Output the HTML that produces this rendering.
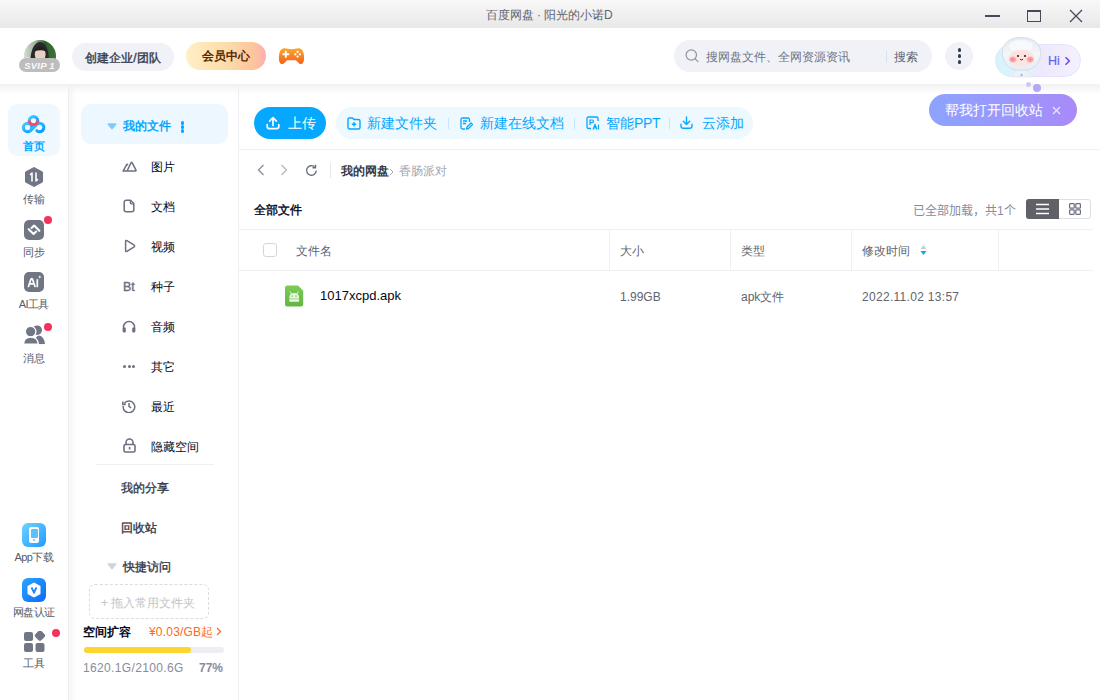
<!DOCTYPE html>
<html><head><meta charset="utf-8">
<style>
*{box-sizing:border-box;margin:0;padding:0}
html,body{width:1100px;height:700px;overflow:hidden;background:#fff;font-family:"Liberation Sans",sans-serif;color:#03081a}
.a{position:absolute}
.t{white-space:nowrap;line-height:16px}
#title{left:0;top:0;width:1100px;height:28px;background:linear-gradient(#f8f8f8,#e8e8e8);}
#hdr{left:0;top:28px;width:1100px;height:56px;background:#fff;z-index:3}
#hshadow{left:0;top:84px;width:1100px;height:10px;background:linear-gradient(#f1f1f1,rgba(255,255,255,0));z-index:4}
#rail{left:0;top:84px;width:69px;height:616px;background:#fff;border-right:1px solid #eceef2}
#side{left:69px;top:84px;width:170px;height:616px;background:#fff;border-right:1px solid #eceef2}
#main{left:239px;top:84px;width:861px;height:616px;background:#fff}
.pill{border-radius:14px}
.rl{width:68px;text-align:center;font-size:11px;letter-spacing:-0.6px;text-indent:-0.6px;color:#555a67;line-height:14px}
.dot{width:8px;height:8px;border-radius:4px;background:#f5325c}
.si{font-size:12px;color:#03081a;line-height:16px}
.tb{font-size:14px;color:#06a7ff;line-height:18px}
.sep{width:1px;background:#c5e6fb}
.th{font-size:12px;color:#5f6470;line-height:16px}
.cl{width:1px;background:#eef0f4}
</style></head>
<body>
<!-- title bar -->
<div id="title" class="a">
  <div class="a t" style="left:486px;top:7px;font-size:12px;color:#5f6470">百度网盘<span style="display:inline-block;width:10px;text-align:center">·</span>阳光的小诺D</div>
  <div class="a" style="left:985px;top:15.3px;width:15px;height:1.4px;background:#454b5a"></div>
  <div class="a" style="left:1027px;top:10px;width:14px;height:12px;border:1.4px solid #454b5a;border-top-width:2px"></div>
  <svg class="a" style="left:1069px;top:9px" width="14" height="14" viewBox="0 0 14 14"><path d="M1 1L13 13M13 1L1 13" stroke="#454b5a" stroke-width="1.3"/></svg>
</div>

<!-- header -->
<div id="hdr" class="a">
  <!-- avatar -->
  <svg class="a" style="left:24px;top:12px" width="32" height="32" viewBox="0 0 32 32">
    <defs><clipPath id="av"><circle cx="16" cy="16" r="16"/></clipPath>
    <linearGradient id="avg" x1="0" y1="0" x2="1" y2="0"><stop offset="0" stop-color="#d5ddd2"/><stop offset="0.35" stop-color="#9db39a"/><stop offset="0.65" stop-color="#2f5e2e"/><stop offset="1" stop-color="#3e7438"/></linearGradient></defs>
    <g clip-path="url(#av)">
      <rect width="32" height="32" fill="url(#avg)"/>
      <circle cx="4" cy="20" r="3" fill="#e8e2e4" opacity="0.8"/>
      <path d="M6.5 32C5.5 18 7 3 16 2C24.5 3 25.5 14 24.5 32z" fill="#2a2a2c"/>
      <ellipse cx="16.2" cy="14.5" rx="5.4" ry="7" fill="#e8d0c2"/>
      <path d="M10.3 11.5Q12.5 6 17 6.3Q21.2 7 22 11.5Q17 9 10.3 11.5z" fill="#231e1f"/>
    </g>
  </svg>
  <div class="a" style="left:19px;top:30px;width:41px;height:14px;border-radius:7px;background:#bdbdbd;color:#fafafa;font-size:9.5px;line-height:15px;text-align:center;font-style:italic;font-weight:bold;letter-spacing:0.2px">SVIP 1</div>
  <!-- create team -->
  <div class="a pill t" style="left:72px;top:15px;width:102px;height:28px;background:#f0f2f8;font-size:12px;line-height:30px;text-align:center;color:#353a4a;-webkit-text-stroke:0.35px #353a4a">创建企业/团队</div>
  <!-- vip -->
  <div class="a pill t" style="left:186px;top:14px;width:80px;height:28px;background:linear-gradient(90deg,#fff0c6 0%,#fddcaa 50%,#fcc59c 85%,#ffadb2 100%);font-size:12px;line-height:29px;text-align:center;color:#5a2900;font-weight:bold">会员中心</div>
  <!-- game -->
  <svg class="a" style="left:278px;top:19px" width="27" height="18" viewBox="0 0 27 18">
    <defs><linearGradient id="gg" x1="0" y1="0" x2="0" y2="1"><stop offset="0" stop-color="#ffa62e"/><stop offset="1" stop-color="#f0621a"/></linearGradient></defs>
    <path d="M6 1.2C3 1.5 1.6 4 1.1 8C0.6 12.5 1 16.5 3.8 17C5.8 17.3 7.2 15 9 13.2H18C19.8 15 21.2 17.3 23.2 17C26 16.5 26.4 12.5 25.9 8C25.4 4 24 1.5 21 1.2C18.5 1 17 2.2 13.5 2.2C10 2.2 8.5 1 6 1.2z" fill="url(#gg)"/>
    <path d="M5.2 7.3h5.2M7.8 4.7v5.2" stroke="#fff" stroke-width="1.9" stroke-linecap="round"/>
    <circle cx="19.6" cy="5" r="1.15" fill="#fff"/><circle cx="19.6" cy="9.6" r="1.15" fill="#fff"/><circle cx="17.3" cy="7.3" r="1.15" fill="#fff"/><circle cx="21.9" cy="7.3" r="1.15" fill="#fff"/>
  </svg>
  <!-- search -->
  <div class="a" style="left:674px;top:12px;width:258px;height:32px;border-radius:16px;background:#f0f2f8"></div>
  <svg class="a" style="left:685px;top:21px" width="15" height="14" viewBox="0 0 15 14"><circle cx="6.3" cy="6" r="5.2" fill="none" stroke="#8d93a2" stroke-width="1.2"/><path d="M10.2 9.8L13 12.6" stroke="#8d93a2" stroke-width="1.2" stroke-linecap="round"/></svg>
  <div class="a t" style="left:706px;top:21px;font-size:12px;color:#6f7483">搜网盘文件、全网资源资讯</div>
  <div class="a" style="left:886px;top:23px;width:1px;height:12px;background:#dde0e7"></div>
  <div class="a t" style="left:894px;top:21px;font-size:12px;color:#5f6470">搜索</div>
  <!-- more -->
  <div class="a" style="left:945px;top:14px;width:28px;height:28px;border-radius:14px;background:#f0f2f8"></div>
  <div class="a" style="left:957.7px;top:20.2px;width:3.6px;height:3.6px;border-radius:2px;background:#333a4e"></div>
  <div class="a" style="left:957.7px;top:26.3px;width:3.6px;height:3.6px;border-radius:2px;background:#333a4e"></div>
  <div class="a" style="left:957.7px;top:32.2px;width:3.6px;height:3.6px;border-radius:2px;background:#333a4e"></div>
  <!-- hi -->
  <div class="a" style="left:995px;top:16px;width:86px;height:33px;border-radius:17px;background:linear-gradient(90deg,#d3f5fd 0%,#e0f3fc 30%,#eee8fd 55%,#f4f1fe 100%);border:1px solid #e8e2fc"></div>
  <svg class="a" style="left:1000px;top:8px" width="44" height="42" viewBox="0 0 44 42">
    <defs><linearGradient id="hg" x1="0" y1="0" x2="0" y2="1"><stop offset="0" stop-color="#e3ebf3"/><stop offset="0.5" stop-color="#f3f6fa"/><stop offset="1" stop-color="#e6edf3"/></linearGradient>
    <radialGradient id="ck" cx="0.5" cy="0.5" r="0.5"><stop offset="0" stop-color="#f7868e"/><stop offset="0.6" stop-color="#f9a5a9"/><stop offset="1" stop-color="#fbd0cf" stop-opacity="0"/></radialGradient></defs>
    <path d="M12 41Q12.5 34 21.5 33.5Q30.5 34 31 41z" fill="#eef2f6" stroke="#dfe5ec" stroke-width="0.8"/>
    <path d="M21 1.5C31 1.5 39.5 6 40.5 15C41.5 24 36 32 28 34H15C7 32 1.5 24 2.5 15C3.5 6 11 1.5 21 1.5z" fill="url(#hg)" stroke="#d5dde7" stroke-width="1"/>
    <ellipse cx="21" cy="10" rx="12" ry="6" fill="#f8fafc" opacity="0.9"/>
    <ellipse cx="21.5" cy="22" rx="12.5" ry="8.2" fill="#fde3df"/>
    <ellipse cx="12.8" cy="23.5" rx="4.5" ry="3.8" fill="url(#ck)"/>
    <ellipse cx="30.2" cy="23.5" rx="4.5" ry="3.8" fill="url(#ck)"/>
    <circle cx="18" cy="20" r="1.1" fill="#3a2020"/><circle cx="25" cy="20" r="1.1" fill="#3a2020"/>
    <path d="M20 23.3q1.5 1.2 3 0" stroke="#3a2020" stroke-width="0.9" fill="none"/>
    <path d="M20 39l1.5-1.5l1.5 1.5l-1.5 1.5z" fill="#7cc3f2"/>
  </svg>
  <div class="a t" style="left:1048px;top:25px;font-size:12.5px;font-weight:500;color:#5566ee;line-height:16px;-webkit-text-stroke:0.2px #5566ee">H<span style="color:#7e58e8;-webkit-text-stroke:0.2px #7e58e8">i</span></div>
  <svg class="a" style="left:1064px;top:28px" width="7" height="10" viewBox="0 0 7 10"><path d="M1.5 1.2L5.3 5L1.5 8.8" stroke="#6a4fe0" stroke-width="1.6" fill="none"/></svg>
</div>
<div class="a" style="left:1026px;top:82px;width:5px;height:5px;border-radius:3px;background:#cfc8fb;z-index:6"></div>
<div class="a" style="left:1033px;top:84px;width:8px;height:8px;border-radius:4px;background:#b3a8f7;z-index:6"></div>
<div id="hshadow" class="a"></div>

<!-- left rail -->
<div id="rail" class="a">
  <div class="a" style="left:8px;top:20px;width:52px;height:52px;border-radius:9px;background:#eff8ff"></div>
  <svg class="a" style="left:21px;top:30px" width="26" height="20" viewBox="0 0 26 20">
    <defs><linearGradient id="lg" x1="0" y1="0" x2="1" y2="1"><stop offset="0" stop-color="#3fd0fb"/><stop offset="1" stop-color="#0798ff"/></linearGradient></defs>
    <g fill="none" stroke="url(#lg)" stroke-width="3.1" stroke-linecap="round">
    <circle cx="12.5" cy="6.8" r="4.2"/>
    <circle cx="6.6" cy="13.5" r="4.2"/>
    <path d="M9.6 16.5L15.7 10.5A4.2 4.2 0 1 1 15.9 16.7"/>
    </g>
    <path d="M8.3 6.5A4.2 4.2 0 0 0 16.7 6.5" stroke="#f84a70" stroke-width="3.1" fill="none"/>
  </svg>
  <div class="a rl t" style="left:0;top:55px;color:#06a7ff;font-weight:bold;font-size:11px">首页</div>
  <!-- transfer -->
  <svg class="a" style="left:24px;top:83px" width="20" height="20" viewBox="0 0 20 20"><path d="M10 0.5L18.5 5v10L10 19.5L1.5 15V5z" fill="#717684" stroke="#717684" stroke-linejoin="round" stroke-width="1"/><path d="M8 6v8M6.5 7.5L8 6M12 14V6M12 14l1.5-1.5" stroke="#fff" stroke-width="1.6" fill="none" stroke-linecap="round"/></svg>
  <div class="a rl t" style="left:0;top:108px">传输</div>
  <!-- sync -->
  <div class="a" style="left:24px;top:136px;width:20px;height:20px;border-radius:5px;background:#717684"></div>
  <svg class="a" style="left:24px;top:136px" width="20" height="20" viewBox="0 0 20 20"><path d="M4.6 9.2L9.6 14L12.2 11.6M15.4 10.8L10.1 5.6L7.5 8" stroke="#fff" stroke-width="2.1" fill="none" stroke-linecap="round" stroke-linejoin="round"/></svg>
  <div class="a dot" style="left:44px;top:132px"></div>
  <div class="a rl t" style="left:0;top:161px">同步</div>
  <!-- AI -->
  <div class="a" style="left:24px;top:188px;width:20px;height:20px;border-radius:5px;background:#717684"></div>
  <svg class="a" style="left:24px;top:188px" width="20" height="20" viewBox="0 0 20 20"><path d="M4.5 14.5L6.8 7.5Q7.6 5.5 8.6 7.5L11 14.5M5.6 11.8h4.4M13.3 7.8v6.7" stroke="#fff" stroke-width="1.7" fill="none" stroke-linecap="round" stroke-linejoin="round"/><path d="M15.8 3.2L16.3 4.5L17.6 5L16.3 5.5L15.8 6.8L15.3 5.5L14 5L15.3 4.5z" fill="#fff"/></svg>
  <div class="a rl t" style="left:0;top:213px">AI工具</div>
  <!-- message -->
  <svg class="a" style="left:23px;top:241px" width="23" height="20" viewBox="0 0 23 20"><circle cx="14.2" cy="5.2" r="4.8" fill="#717684"/><path d="M11 19.2Q12 11 16 10.5Q21 11 22 19.2z" fill="#717684"/><circle cx="7.6" cy="6.6" r="5.3" fill="#717684" stroke="#fff" stroke-width="1.3"/><path d="M0.4 19.2Q1 12.2 7.8 12.2Q14.6 12.2 15.4 19.2z" fill="#717684" stroke="#fff" stroke-width="1.3"/><rect x="0" y="19.2" width="23" height="1" fill="#fff"/></svg>
  <div class="a dot" style="left:44px;top:239px"></div>
  <div class="a rl t" style="left:0;top:267px">消息</div>
  <!-- app -->
  <div class="a" style="left:22px;top:439px;width:24px;height:24px;border-radius:6px;background:linear-gradient(135deg,#6fd3ff,#1f9bff)"></div>
  <div class="a" style="left:29px;top:442.5px;width:10px;height:16px;border-radius:2px;background:#fff"></div>
  <div class="a" style="left:30.5px;top:444.5px;width:7px;height:9px;border-radius:1px;background:#5cc0ff"></div>
  <div class="a" style="left:33px;top:455px;width:2px;height:2px;border-radius:1px;background:#5cc0ff"></div>
  <div class="a rl t" style="left:0;top:466px">App下载</div>
  <!-- verify -->
  <div class="a" style="left:22px;top:494px;width:24px;height:24px;border-radius:6px;background:linear-gradient(135deg,#2da4ff,#0a6cf5)"></div>
  <svg class="a" style="left:22px;top:494px" width="24" height="24" viewBox="0 0 24 24"><path d="M12 4.5L18.5 8v8L12 19.5L5.5 16V8z" fill="#fff"/><path d="M9.5 9.5L12 14.5L14.5 9.5" stroke="#1b86ff" stroke-width="1.8" fill="none"/></svg>
  <div class="a rl t" style="left:0;top:521px">网盘认证</div>
  <!-- tools -->
  <svg class="a" style="left:24px;top:547px" width="21" height="21" viewBox="0 0 21 21"><rect x="0" y="1" width="9" height="9" rx="2" fill="#717684"/><rect x="11" y="0" width="8.5" height="8.5" rx="2" fill="#717684" transform="rotate(45 15.25 5.25)"/><rect x="0" y="12" width="9" height="9" rx="2" fill="#717684"/><rect x="11.5" y="12" width="9" height="9" rx="2" fill="#717684"/></svg>
  <div class="a dot" style="left:52px;top:545px"></div>
  <div class="a rl t" style="left:0;top:572px">工具</div>
</div>

<!-- sidebar -->
<div id="side" class="a">
  <div class="a" style="left:0;top:0;width:8px;height:616px;background:linear-gradient(90deg,rgba(0,0,0,0.035),rgba(0,0,0,0))"></div>
  <div class="a" style="left:12px;top:20px;width:147px;height:40px;border-radius:10px;background:#edf7ff"></div>
  <svg class="a" style="left:38px;top:39px" width="10" height="7" viewBox="0 0 10 7"><path d="M1.2 1h7.6L5 5.8z" fill="#7fcaf9" stroke="#7fcaf9" stroke-width="1.4" stroke-linejoin="round"/></svg>
  <div class="a t" style="left:53.7px;top:34.3px;font-size:12px;font-weight:bold;color:#06a7ff">我的文件</div>
  <div class="a" style="left:111.5px;top:36.6px;width:3.8px;height:4px;border-radius:2px;background:#06a7ff"></div>
  <div class="a" style="left:111.5px;top:40.6px;width:3.8px;height:4px;border-radius:2px;background:#06a7ff"></div>
  <div class="a" style="left:111.5px;top:44.6px;width:3.8px;height:4px;border-radius:2px;background:#06a7ff"></div>

  <!-- items -->
  <svg class="a" style="left:53px;top:77px" width="15" height="11" viewBox="0 0 15 11"><path d="M1.3 9.8L4.6 3.6Q5.2 2.8 5.6 3.8" fill="none" stroke="#6b7080" stroke-width="1.5" stroke-linecap="round"/><path d="M5.2 9.8L9 1.8Q9.6 0.9 10.2 1.8L14 9.2Q14.2 9.9 13.5 9.9H1.3" fill="none" stroke="#6b7080" stroke-width="1.5" stroke-linejoin="round" stroke-linecap="round"/></svg>
  <div class="a si t" style="left:82px;top:75px">图片</div>
  <svg class="a" style="left:54px;top:115px" width="12" height="14" viewBox="0 0 12 14"><path d="M3.2 1.2h4.3l3.3 3.3v6.3a2 2 0 0 1-2 2H3.2a2 2 0 0 1-2-2V3.2a2 2 0 0 1 2-2z" fill="none" stroke="#6b7080" stroke-width="1.5" stroke-linejoin="round"/><path d="M7.3 1.5v2.3a1 1 0 0 0 1 1h2.2" fill="none" stroke="#6b7080" stroke-width="1.3"/></svg>
  <div class="a si t" style="left:82px;top:115px">文档</div>
  <svg class="a" style="left:55px;top:155px" width="12" height="14" viewBox="0 0 12 14"><path d="M1.6 2.4Q1.6 1 2.9 1.7L10.2 6.2Q11 7 10.2 7.8L2.9 12.3Q1.6 13 1.6 11.6z" fill="none" stroke="#6b7080" stroke-width="1.5" stroke-linejoin="round"/></svg>
  <div class="a si t" style="left:82px;top:155px">视频</div>
  <div class="a t" style="left:54px;top:195px;font-size:12.5px;color:#6b7080;-webkit-text-stroke:0.4px #6b7080">Bt</div>
  <div class="a si t" style="left:82px;top:195px">种子</div>
  <svg class="a" style="left:53px;top:235.5px" width="14" height="13" viewBox="0 0 14 13"><path d="M1.5 11V7a5.5 5.5 0 0 1 11 0v4" fill="none" stroke="#6b7080" stroke-width="1.5"/><rect x="0.8" y="7.5" width="3" height="5" rx="1" fill="#6b7080"/><rect x="10.2" y="7.5" width="3" height="5" rx="1" fill="#6b7080"/></svg>
  <div class="a si t" style="left:82px;top:235px">音频</div>
  <div class="a" style="left:54px;top:281px;width:3px;height:3px;border-radius:2px;background:#6b7080"></div>
  <div class="a" style="left:58.5px;top:281px;width:3px;height:3px;border-radius:2px;background:#6b7080"></div>
  <div class="a" style="left:63px;top:281px;width:3px;height:3px;border-radius:2px;background:#6b7080"></div>
  <div class="a si t" style="left:82px;top:275px">其它</div>
  <svg class="a" style="left:53px;top:315px" width="14" height="14" viewBox="0 0 14 14"><path d="M2.2 4.5A5.8 5.8 0 1 1 1.2 7" fill="none" stroke="#6b7080" stroke-width="1.5"/><path d="M0.8 2.5v3h3" fill="none" stroke="#6b7080" stroke-width="1.5"/><path d="M7 4v3.3l2 1.5" fill="none" stroke="#6b7080" stroke-width="1.5"/></svg>
  <div class="a si t" style="left:82px;top:315px">最近</div>
  <svg class="a" style="left:54px;top:354px" width="13" height="15" viewBox="0 0 13 15"><path d="M3 6.5V4.5a3.5 3.5 0 0 1 7 0v2" fill="none" stroke="#6b7080" stroke-width="1.6"/><rect x="1" y="6.5" width="11" height="7.5" rx="1.5" fill="none" stroke="#6b7080" stroke-width="1.6"/><rect x="5.8" y="9" width="1.6" height="2.5" fill="#6b7080"/></svg>
  <div class="a si t" style="left:82px;top:355px">隐藏空间</div>
  <div class="a" style="left:27px;top:380px;width:118px;height:1px;background:#eef0f4"></div>
  <div class="a si t" style="left:52px;top:396px;color:#343948;-webkit-text-stroke:0.35px #343948">我的分享</div>
  <div class="a si t" style="left:52px;top:436px;color:#343948;-webkit-text-stroke:0.35px #343948">回收站</div>
  <svg class="a" style="left:38px;top:479px" width="10" height="7" viewBox="0 0 10 7"><path d="M1.2 1h7.6L5 5.8z" fill="#cfd3db" stroke="#cfd3db" stroke-width="1.4" stroke-linejoin="round"/></svg>
  <div class="a si t" style="left:54px;top:475px;color:#343948;-webkit-text-stroke:0.35px #343948">快捷访问</div>
  <div class="a" style="left:20px;top:500px;width:120px;height:35px;border:1px dashed #d9dce3;border-radius:6px"></div>
  <div class="a t" style="left:32px;top:511px;font-size:12px;color:#c0c4cc">+ 拖入常用文件夹</div>
  <div class="a si t" style="left:14px;top:540px;font-weight:bold">空间扩容</div>
  <div class="a t" style="left:80px;top:540px;font-size:12px;color:#ff6a14;letter-spacing:0.2px">¥0.03/GB起</div>
  <svg class="a" style="left:147px;top:543px" width="6" height="9" viewBox="0 0 6 9"><path d="M1 1l3.5 3.5L1 8" stroke="#ff6a14" stroke-width="1.2" fill="none"/></svg>
  <div class="a" style="left:15px;top:563px;width:140px;height:6px;border-radius:3px;background:#eceef2"></div>
  <div class="a" style="left:15px;top:563px;width:107px;height:6px;border-radius:3px;background:#fcd62e"></div>
  <div class="a t" style="left:14px;top:576px;font-size:12px;color:#878c9c;letter-spacing:0.35px">1620.1G/2100.6G</div>
  <div class="a t" style="left:130px;top:576px;font-size:12px;color:#878c9c;font-weight:bold">77%</div>
</div>

<!-- main -->
<div id="main" class="a">
  <!-- upload -->
  <div class="a" style="left:15px;top:23px;width:72px;height:32px;border-radius:16px;background:#06a7ff"></div>
  <svg class="a" style="left:27px;top:32px" width="14" height="14" viewBox="0 0 14 14"><path d="M7 9.5V1.8M3.6 5.1L7 1.7L10.4 5.1M1.2 8.5v2a2.2 2.2 0 0 0 2.2 2.2h7.2a2.2 2.2 0 0 0 2.2-2.2v-2" stroke="#fff" stroke-width="1.7" fill="none" stroke-linecap="round" stroke-linejoin="round"/></svg>
  <div class="a tb t" style="left:49px;top:30px;color:#fff">上传</div>
  <!-- toolbar pill -->
  <div class="a" style="left:97px;top:23px;width:417px;height:32px;border-radius:16px;background:#eef8ff"></div>
  <svg class="a" style="left:108px;top:33px" width="14" height="13" viewBox="0 0 14 13"><path d="M1 2.5a1.5 1.5 0 0 1 1.5-1.5h3l1.5 1.5h4.5a1.5 1.5 0 0 1 1.5 1.5v6.5a1.5 1.5 0 0 1-1.5 1.5h-9A1.5 1.5 0 0 1 1 10.5z" fill="none" stroke="#06a7ff" stroke-width="1.4"/><path d="M7 5v4.5M4.8 7.2h4.5" stroke="#06a7ff" stroke-width="1.4"/></svg>
  <div class="a tb t" style="left:128px;top:30px">新建文件夹</div>
  <div class="a sep" style="left:209px;top:34px;height:11px"></div>
  <svg class="a" style="left:221px;top:33px" width="13" height="13" viewBox="0 0 13 13"><path d="M9.5 5V2.5a1.5 1.5 0 0 0-1.5-1.5H2.5A1.5 1.5 0 0 0 1 2.5v8A1.5 1.5 0 0 0 2.5 12H5" fill="none" stroke="#06a7ff" stroke-width="1.3"/><path d="M3 4h4M3 6.5h3" stroke="#06a7ff" stroke-width="1.3"/><path d="M6.5 12l0.5-2l4-4l1.5 1.5l-4 4z" fill="none" stroke="#06a7ff" stroke-width="1.3" stroke-linejoin="round"/></svg>
  <div class="a tb t" style="left:241px;top:30px">新建在线文档</div>
  <div class="a sep" style="left:335px;top:34px;height:11px"></div>
  <svg class="a" style="left:346.5px;top:32.3px" width="14" height="14" viewBox="0 0 14 14"><path d="M5 12.5H2.5A1.5 1.5 0 0 1 1 11V2.5A1.5 1.5 0 0 1 2.5 1h8A1.5 1.5 0 0 1 12 2.5V5" fill="none" stroke="#06a7ff" stroke-width="1.3"/><path d="M4 9V4h2.2a1.3 1.3 0 0 1 0 2.6H4" fill="none" stroke="#06a7ff" stroke-width="1.2"/><path d="M7 13.5L9 8.5L11 13.5M7.8 11.8h2.4M12.5 8.5v5" fill="none" stroke="#06a7ff" stroke-width="1.2"/></svg>
  <div class="a tb t" style="left:367px;top:30px">智能<span style="letter-spacing:-0.4px">PPT</span></div>
  <div class="a sep" style="left:430px;top:34px;height:11px"></div>
  <svg class="a" style="left:441px;top:32px" width="13" height="13" viewBox="0 0 13 13"><path d="M6.5 1v7.3M3.3 5.3L6.5 8.5L9.7 5.3M1 8.3v1.7a2.2 2.2 0 0 0 2.2 2.2h6.6a2.2 2.2 0 0 0 2.2-2.2V8.3" stroke="#06a7ff" stroke-width="1.4" fill="none" stroke-linecap="round" stroke-linejoin="round"/></svg>
  <div class="a tb t" style="left:463px;top:30px">云添加</div>

  <!-- tooltip -->
  <div class="a" style="left:690px;top:10px;width:148px;height:32px;border-radius:16px;background:linear-gradient(90deg,#8da3ff 0%,#9a98fc 50%,#a98af8 100%);z-index:5"></div>
  <div class="a tb t" style="left:706px;top:17px;color:#fff;z-index:6">帮我打开回收站</div>
  <svg class="a" style="left:813px;top:22px;z-index:6" width="9" height="9" viewBox="0 0 9 9"><path d="M1 1L8 8M8 1L1 8" stroke="#e6e4ff" stroke-width="1.3"/></svg>

  <div class="a" style="left:0;top:65px;width:861px;height:1px;background:#f0f1f4"></div>
  <!-- breadcrumb -->
  <svg class="a" style="left:18px;top:80px" width="8" height="12" viewBox="0 0 8 12"><path d="M6.5 1L1.5 6L6.5 11" stroke="#878c9c" stroke-width="1.3" fill="none"/></svg>
  <svg class="a" style="left:41px;top:80px" width="8" height="12" viewBox="0 0 8 12"><path d="M1.5 1L6.5 6L1.5 11" stroke="#b4b8c2" stroke-width="1.3" fill="none"/></svg>
  <svg class="a" style="left:65.5px;top:79.5px" width="13" height="13" viewBox="0 0 13 13"><path d="M11.2 6.5A4.8 4.8 0 1 1 9.5 2.8" fill="none" stroke="#6b7080" stroke-width="1.4"/><path d="M10.5 0.8v3h-3" fill="none" stroke="#6b7080" stroke-width="1.4"/></svg>
  <div class="a" style="left:91px;top:79px;width:1px;height:15px;background:#e6e8ed"></div>
  <div class="a t" style="left:102px;top:79px;font-size:12px;font-weight:bold;color:#363b4a">我的网盘</div><svg class="a" style="left:150px;top:83.5px" width="5" height="8" viewBox="0 0 5 8"><path d="M1 1L4 4L1 7" stroke="#a5a9b3" stroke-width="1" fill="none"/></svg><div class="a t" style="left:160px;top:79px;font-size:12px;font-weight:500;color:#9fa4b0">香肠派对</div>

  <!-- all files -->
  <div class="a t" style="left:15px;top:118px;font-size:12px;color:#03081a;-webkit-text-stroke:0.4px #03081a">全部文件</div>
  <div class="a t" lang="zh-CN" style="left:674px;top:119px;font-size:12px;color:#878c9c">已全部加载，共1个</div>
  <div class="a" style="left:787px;top:115px;width:65px;height:20px;border:1px solid #dcdfe6;border-radius:3px"></div>
  <div class="a" style="left:787px;top:115px;width:33px;height:20px;background:#5f6166;border-radius:3px 0 0 3px"></div>
  <svg class="a" style="left:797px;top:119px" width="13" height="12" viewBox="0 0 13 12"><path d="M0 1.5h13M0 6h13M0 10.5h13" stroke="#fff" stroke-width="1.3"/></svg>
  <svg class="a" style="left:830px;top:119px" width="12" height="12" viewBox="0 0 12 12"><rect x="0.6" y="0.6" width="4.6" height="4.6" rx="0.8" fill="none" stroke="#6b7080" stroke-width="1.2"/><rect x="6.8" y="0.6" width="4.6" height="4.6" rx="0.8" fill="none" stroke="#6b7080" stroke-width="1.2"/><rect x="0.6" y="6.8" width="4.6" height="4.6" rx="0.8" fill="none" stroke="#6b7080" stroke-width="1.2"/><rect x="6.8" y="6.8" width="4.6" height="4.6" rx="0.8" fill="none" stroke="#6b7080" stroke-width="1.2"/></svg>

  <!-- table header -->
  <div class="a" style="left:0;top:145px;width:854px;height:1px;background:#eef0f4"></div>
  <div class="a" style="left:0;top:186px;width:854px;height:1px;background:#eef0f4"></div>
  <div class="a cl" style="left:370px;top:146px;height:40px"></div>
  <div class="a cl" style="left:491px;top:146px;height:40px"></div>
  <div class="a cl" style="left:612px;top:146px;height:40px"></div>
  <div class="a cl" style="left:759px;top:146px;height:40px"></div>
  <div class="a" style="left:24px;top:159px;width:14px;height:14px;border:1px solid #d3d6dc;border-radius:3px"></div>
  <div class="a th t" style="left:57px;top:159px">文件名</div>
  <div class="a th t" style="left:381px;top:159px">大小</div>
  <div class="a th t" style="left:502px;top:159px">类型</div>
  <div class="a th t" style="left:623px;top:159px">修改时间</div>
  <svg class="a" style="left:681px;top:160px" width="7" height="12" viewBox="0 0 7 12"><path d="M3.5 1L6.5 5H0.5z" fill="#c9cdd4"/><path d="M3.5 11L6.5 7H0.5z" fill="#06a7ff"/></svg>

  <!-- row -->
  <svg class="a" style="left:46px;top:201px" width="19" height="22" viewBox="0 0 19 22"><defs><linearGradient id="ag" x1="0" y1="0" x2="0" y2="1"><stop offset="0" stop-color="#7ccb57"/><stop offset="1" stop-color="#62b645"/></linearGradient></defs><path d="M2.5 0.5h10.5l5.2 5.2V19a2.5 2.5 0 0 1-2.5 2.5H2.5A2.5 2.5 0 0 1 0 19V3A2.5 2.5 0 0 1 2.5 0.5z" fill="url(#ag)"/><g transform="translate(0 1.3)"><path d="M5.2 5.5L6.2 7.2M13.2 5.5L12.2 7.2" stroke="#eaf7e3" stroke-width="0.9" stroke-linecap="round"/><path d="M4.3 11.6Q4.3 6.8 9.2 6.8Q14.1 6.8 14.1 11.6z" fill="#eaf7e3"/><circle cx="7.3" cy="9.8" r="0.9" fill="#8fd06f"/><circle cx="11" cy="9.8" r="0.9" fill="#8fd06f"/><rect x="4.3" y="11.9" width="9.8" height="1" fill="#c9eab8"/><path d="M4.3 12.9h9.8v1.6a1 1 0 0 1-1 1H5.3a1 1 0 0 1-1-1z" fill="#eaf7e3"/></g></svg>
  <div class="a t" style="left:81px;top:204px;font-size:13px;color:#03081a">1017xcpd.apk</div>
  <div class="a t" style="left:381px;top:205px;font-size:12px;color:#5f6470">1.99GB</div>
  <div class="a t" style="left:502px;top:205px;font-size:12px;color:#5f6470">apk文件</div>
  <div class="a t" style="left:623px;top:205px;font-size:12px;color:#5f6470;letter-spacing:0.3px">2022.11.02 13:57</div>
</div>
</body></html>
